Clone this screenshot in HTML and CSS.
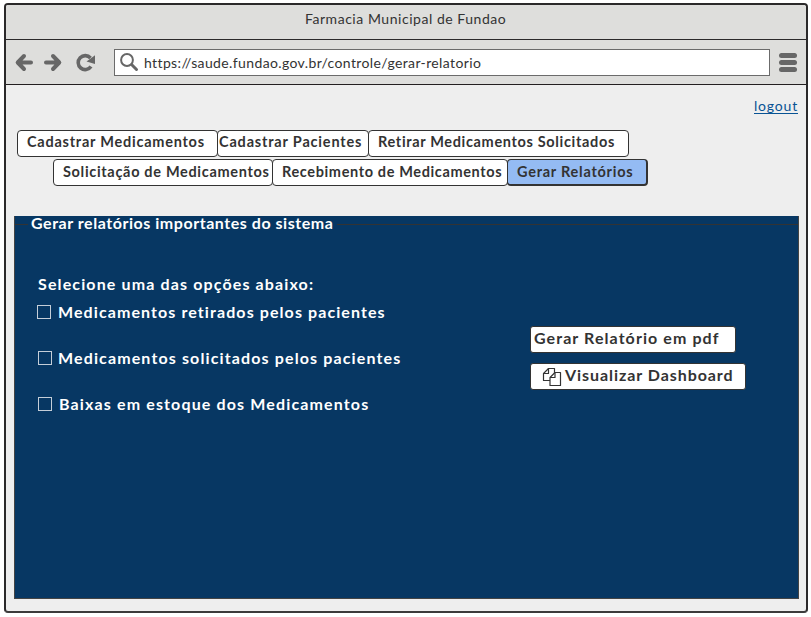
FILE: index.html
```html
<!DOCTYPE html>
<html lang="pt-BR">
<head>
<meta charset="utf-8">
<title>Farmacia Municipal de Fundao</title>
<link rel="stylesheet" href="styles.css">
</head>
<body>
<div class="window">
  <header class="titlebar">Farmacia Municipal de Fundao</header>
  <div class="toolbar">
    <svg class="nav-icons" width="84" height="20" viewBox="0 0 84 20" fill="none" stroke="#676767" stroke-width="4" stroke-linecap="round" stroke-linejoin="round">
      <path d="M17 10.500H5M10 4L3.700 10.500L10 17"/>
      <path d="M32 10.500H44M39 4L45.300 10.500L39 17"/>
      <path d="M77 14.500A7 7 0 1 1 76.500 6" stroke-width="3.600" stroke-linecap="butt"/>
      <path d="M81 3.200V12L72.500 9.500Z" fill="#676767" stroke="none"/>
    </svg>
    <div class="address">
      <svg width="20" height="20" viewBox="0 0 20 20" fill="none" stroke="#676767" stroke-linecap="round"><circle cx="8" cy="8" r="5.900" stroke-width="2"/><path d="M12.800 12.800L17.500 17.500" stroke-width="3"/></svg>
      <span>https://saude.fundao.gov.br/controle/gerar-relatorio</span>
    </div>
    <div class="menu"><i></i><i></i><i></i></div>
  </div>
  <main class="page">
    <div class="session"><a class="logout">logout</a></div>
    <nav class="tabs">
      <div class="row">
        <div class="tab tab-cadastrar">Cadastrar Medicamentos</div>
        <div class="tab tab-pacientes">Cadastrar Pacientes</div>
        <div class="tab tab-retirar">Retirar Medicamentos Solicitados</div>
      </div>
      <div class="row row-second">
        <div class="tab tab-solicitacao">Solicitação de Medicamentos</div>
        <div class="tab tab-recebimento">Recebimento de Medicamentos</div>
        <div class="tab tab-relatorios">Gerar Relatórios</div>
      </div>
    </nav>
    <section class="panel">
      <h1 class="legend">Gerar relatórios importantes do sistema</h1>
      <div class="content">
        <div class="options">
          <p class="prompt">Selecione uma das opções abaixo:</p>
          <label class="option first"><i class="box"></i>Medicamentos retirados pelos pacientes</label>
          <label class="option second"><i class="box"></i>Medicamentos solicitados pelos pacientes</label>
          <label class="option third"><i class="box"></i>Baixas em estoque dos Medicamentos</label>
        </div>
        <div class="actions">
          <div class="button pdf">Gerar Relatório em pdf</div>
          <div class="button dashboard">
            <svg width="20" height="20" viewBox="0 0 20 20" fill="#fff" stroke="#333" stroke-width="1.200" stroke-linejoin="round">
              <path d="M6.500 1.500H12.500V13.500H1.500V6.500Z"/><path d="M6.500 1.500V6.500H1.500" fill="none"/>
              <path d="M13 5.500H18.500V18.500H8V10.500Z"/><path d="M13 5.500V10.500H8" fill="none"/>
            </svg>
            <span>Visualizar Dashboard</span>
          </div>
        </div>
      </div>
    </section>
  </main>
</div>
</body>
</html>
```
FILE: styles.css
```css
* { box-sizing: border-box; }
body {
  margin: 0;
  padding: 3px 3px 4px 4px;
  height: 617px;
  background: #fff;
  color: #333;
  font: bold 16px/20px Lato, sans-serif;
  white-space: nowrap;
}
.window {
  height: 610px;
  border: 2px solid #2b292a;
  border-bottom-color: #3b3b3b;
  border-radius: 4px;
  background: #eee;
  overflow: hidden;
}
.titlebar {
  height: 35px;
  padding: 4px 0 0 299px;
  border-bottom: 1px solid #2b292a;
  background: #dededc;
  font-weight: 400;
  font-size: 14px;
  letter-spacing: .54px;
}
.toolbar {
  display: flex;
  align-items: center;
  height: 45px;
  padding: 0 9px 0 8px;
  border-bottom: 1px solid #231f20;
  background: #dededc;
}
.nav-icons { flex: none; }
.address {
  display: flex;
  align-items: center;
  width: 656px;
  height: 27px;
  margin-left: 16px;
  padding-left: 4px;
  border: 1px solid #6b6b6b;
  background: #fff;
  font-weight: 400;
  font-size: 14px;
  letter-spacing: .375px;
}
.address svg { margin-right: 5px; }
.address span { padding-top: 2px; }
.menu {
  display: flex;
  flex-direction: column;
  gap: 2px;
  width: 18px;
  margin-left: 9px;
}
.menu i { height: 5px; border-radius: 2.5px; background: #676767; }
.page { padding: 0 7px 0 8px; }
.session {
  display: flex;
  justify-content: flex-end;
  height: 45px;
  padding: 11px 1px 0 0;
}
.logout {
  height: 18px;
  border-bottom: 1px solid #085394;
  color: #085394;
  font-weight: 400;
  font-size: 14px;
  letter-spacing: .81px;
}
.tabs { display: flex; flex-direction: column; gap: 2px; padding-left: 3px; }
.row { display: flex; }
.row-second { padding-left: 36px; }
.tab {
  height: 27px;
  padding: 1px 0 0 9px;
  border: 1.500px solid #333;
  border-radius: 4px;
  background: #fff;
  font-size: 14.500px;
}
.row-second .tab { padding-top: 2px; }
.tab + .tab { margin-left: -1px; }
.tab-cadastrar { width: 201px; letter-spacing: .76px; }
.row .tab-pacientes { width: 152px; padding-left: 1px; letter-spacing: .82px; }
.tab-retirar { width: 261px; letter-spacing: .66px; }
.tab-solicitacao { width: 220px; letter-spacing: .68px; }
.tab-recebimento { width: 236px; letter-spacing: .63px; }
.tab-relatorios {
  width: 141px;
  border-width: 1px 2px 2px 1px;
  background: #94bbf3;
  letter-spacing: .75px;
}
.panel {
  height: 383px;
  margin-top: 30px;
  background: linear-gradient(#333, #333) 0 8px / 100% 1px no-repeat, #073763;
  border: 1px solid #444;
  border-top: 0;
  color: #fff;
}
.legend {
  width: 309px;
  height: 20px;
  margin: 0 0 0 13px;
  padding: 0 0 0 3px;
  background: #073763;
  font-size: 16px;
  line-height: 13px;
  letter-spacing: .54px;
}
.content { display: flex; }
.options { width: 515px; padding: 38px 0 0 22px; }
.prompt { height: 20px; margin: 0 0 8px 1px; letter-spacing: 1.13px; }
.option { display: flex; align-items: center; height: 20px; margin-bottom: 26px; }
.box {
  width: 14px;
  height: 14px;
  margin-right: 7px;
  border: 1px solid #c5ced8;
}
.first { letter-spacing: 1.091px; }
.second { margin-left: 1px; letter-spacing: 1.13px; }
.second .box { margin-right: 6px; }
.third { margin-left: 1px; letter-spacing: 1.14px; }
.actions {
  display: flex;
  flex-direction: column;
  align-items: flex-start;
  gap: 10px;
  padding-top: 90px;
}
.button {
  display: flex;
  height: 27px;
  border: 1px solid #333;
  border-radius: 3px;
  background: #fff;
  color: #333;
}
.pdf { width: 206px; padding: 1px 0 0 3px; letter-spacing: 1.08px; }
.dashboard { width: 216px; padding: 1px 0 0 11px; letter-spacing: .94px; }
.dashboard svg { margin: 2px 3px 0 0; }
```
